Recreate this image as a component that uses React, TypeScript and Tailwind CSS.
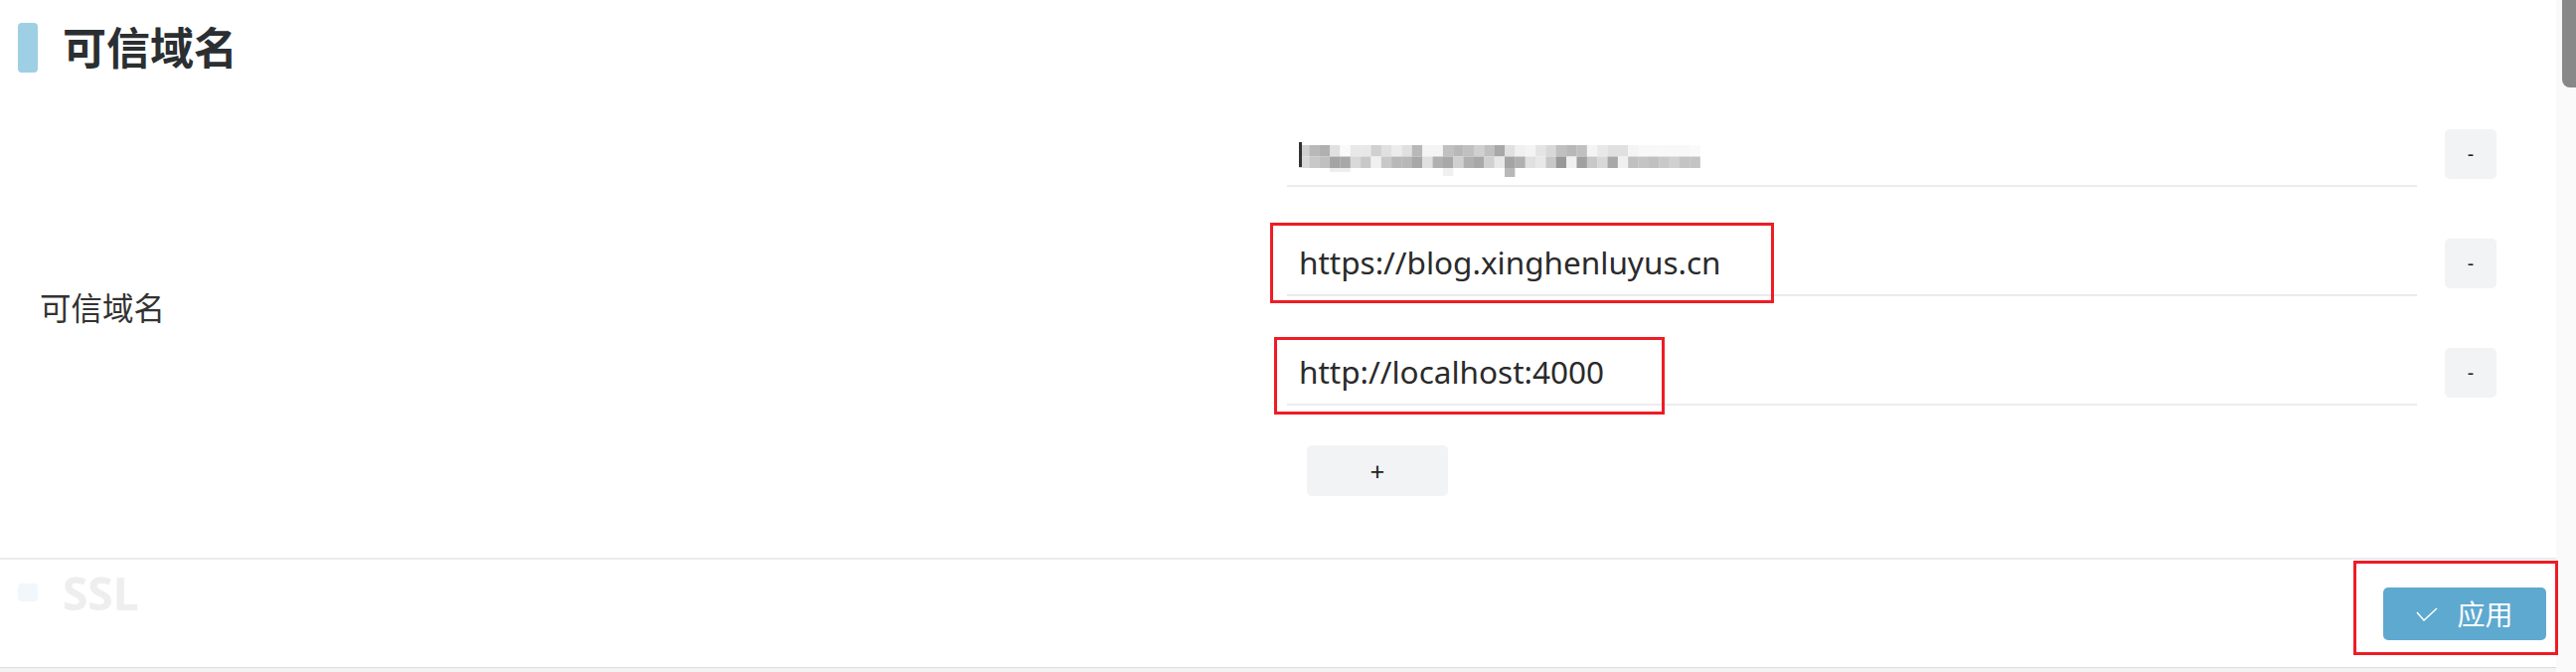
import { ReactNode } from 'react';

const mosaicTop = ['d0d0d0', 'b8b8b8', 'b0b0b0', 'e0e0e0', 'fafafa', 'e8e8e8', 'e8e8e8', 'd0d0d0', 'e0e0e0', 'ececec', 'e0e0e0', 'b8b8b8', 'f4f4f4', 'f4f4f4', 'c0c0c0', 'b8b8b8', 'c0c0c0', 'd0d0d0', 'c0c0c0', 'a8a8a8', 'e0e0e0', 'f0f0f0', 'f4f4f4', 'e4e4e4', 'd8d8d8', 'c0c0c0', 'b8b8b8', 'c0c0c0', 'f4f4f4', 'e8e8e8', 'e0e0e0', 'e0e0e0', 'f4f4f4', 'f8f8f8', 'f8f8f8', 'f8f8f8', 'f8f8f8', 'f8f8f8', 'fafafa'];
const mosaicBottom = ['d8d8d8', 'c8c8c8', 'c0c0c0', 'a4a4a4', 'a8a8a8', 'd8d8d8', 'c8c8c8', 'f0f0f0', 'c8c8c8', 'b8b8b8', 'b8b8b8', 'a8a8a8', 'e0e0e0', 'b0b0b0', 'a8a8a8', 'd0d0d0', 'b0b0b0', 'a8a8a8', 'd0d0d0', 'e8e8e8', 'a4a4a4', 'b0b0b0', 'e0e0e0', 'e8e8e8', 'c8c8c8', '989898', 'f0f0f0', 'a0a0a0', 'c8c8c8', 'd8d8d8', 'a8a8a8', 'f0f0f0', 'c0c0c0', 'c4c4c4', 'c0c0c0', 'c8c8c8', 'd0d0d0', 'c4c4c4', 'c4c4c4'];

// pixelated (blurred) first domain
function Mosaic() {
  const w = 10.35;
  return (
    <svg width="410" height="48" viewBox="0 0 410 48" className="block">
      {mosaicTop.map((c, i) => (
        <rect key={'t' + i} x={i * w} y={16} width={w + 0.2} height={11.5} fill={'#' + c} />
      ))}
      {mosaicBottom.map((c, i) => (
        <rect key={'b' + i} x={i * w} y={27.5} width={w + 0.2} height={11.5} fill={'#' + c} />
      ))}
      <rect x={3 * w} y={39} width={w * 2} height={4} fill="#eeeeee" />
      <rect x={14 * w} y={39} width={w} height={8} fill="#f0f0f0" />
      <rect x={20 * w} y={39} width={w} height={9} fill="#b8b8b8" />
      <rect x={0} y={13} width={3} height={25} fill="#333" />
    </svg>
  );
}

function RedBox({ className }: { className: string }) {
  return <div className={`pointer-events-none absolute border-[3px] border-[#ee1c25] ${className}`} />;
}

function UrlRow({ children }: { children: ReactNode }) {
  return (
    <div className="flex items-center">
      <div className="relative flex h-[67px] w-[1137px] items-center border-b-2 border-[#ebebf0] pl-[12px]">
        {children}
      </div>
      <button className="ml-[28px] flex h-[50px] w-[52px] items-center justify-center rounded-[5px] bg-[#f2f3f5] text-[20px] text-[#1f1f1f]">
        -
      </button>
    </div>
  );
}

export default function App() {
  return (
    <div className="flex h-[676px] w-full overflow-hidden bg-white font-['Noto_Sans','Noto_Sans_CJK_SC',sans-serif] text-[#303133]">
      <div className="flex min-w-0 flex-1 flex-col">
        {/* Section title */}
        <header className="flex items-center pl-[18px] pt-[23px]">
          <span className="h-[50px] w-[20px] rounded-[4px] bg-[#9fcfe4]" />
          <h1 className="ml-[25px] text-[44px] font-bold leading-none text-[#2b2f31]">可信域名</h1>
        </header>

        {/* Trusted domains form row */}
        <div className="mt-[48px] grid grid-cols-[1295px_1fr] items-center">
          <label className="pl-[40px] text-[31.5px] text-[#333]">可信域名</label>
          <div className="flex flex-col gap-[43px]">
            <UrlRow>
              <Mosaic />
            </UrlRow>
            <UrlRow>
              <span className="text-[31.5px] text-[#2a2a2a]">https://blog.xinghenluyus.cn</span>
              <RedBox className="left-[-17px] top-[-7px] h-[81px] w-[507px]" />
            </UrlRow>
            <UrlRow>
              <span className="text-[31.5px] text-[#2a2a2a]">http://localhost:4000</span>
              <RedBox className="left-[-13px] top-[-2px] h-[78px] w-[393px]" />
            </UrlRow>
            <button className="ml-[20px] mt-[-3px] flex h-[51px] w-[142px] items-center justify-center rounded-[5px] bg-[#f2f3f5] text-[26px] leading-none text-[#1f1f1f]">
              +
            </button>
          </div>
        </div>

        <div className="flex-1" />

        {/* Sticky action bar */}
        <footer className="flex h-[110px] items-start justify-between border-t-2 border-[#ebebf0] bg-white">
          <div className="flex items-center pl-[18px] pt-[10px]">
            <span className="h-[18px] w-[20px] rounded-[4px] bg-[#f1f7fa]" />
            <span className="ml-[25px] text-[46px] font-bold leading-none text-[#eeeeee]">SSL</span>
          </div>
          <div className="relative mr-[10px] mt-[28px]">
            <button className="flex h-[53px] w-[164px] items-center justify-center gap-[19px] rounded-[5px] bg-[#5ea9cf] text-[28px] text-white">
              <svg width="22" height="14" viewBox="0 0 22 14" fill="none" stroke="white" strokeWidth="1.5">
                <path d="M1 5l7 8L21 1" />
              </svg>
              <span className="leading-none">应用</span>
            </button>
            <RedBox className="left-[-30px] top-[-27px] h-[95px] w-[206px]" />
          </div>
        </footer>
        <div className="h-[5px] border-t border-[#dcdcdc] bg-[#f3f3f3]" />
      </div>

      {/* Scrollbar */}
      <div className="flex w-[20px] flex-col bg-[#fafafa]">
        <div className="ml-auto h-[88px] w-[14px] rounded-bl-[8px] bg-[#888]" />
      </div>
    </div>
  );
}
